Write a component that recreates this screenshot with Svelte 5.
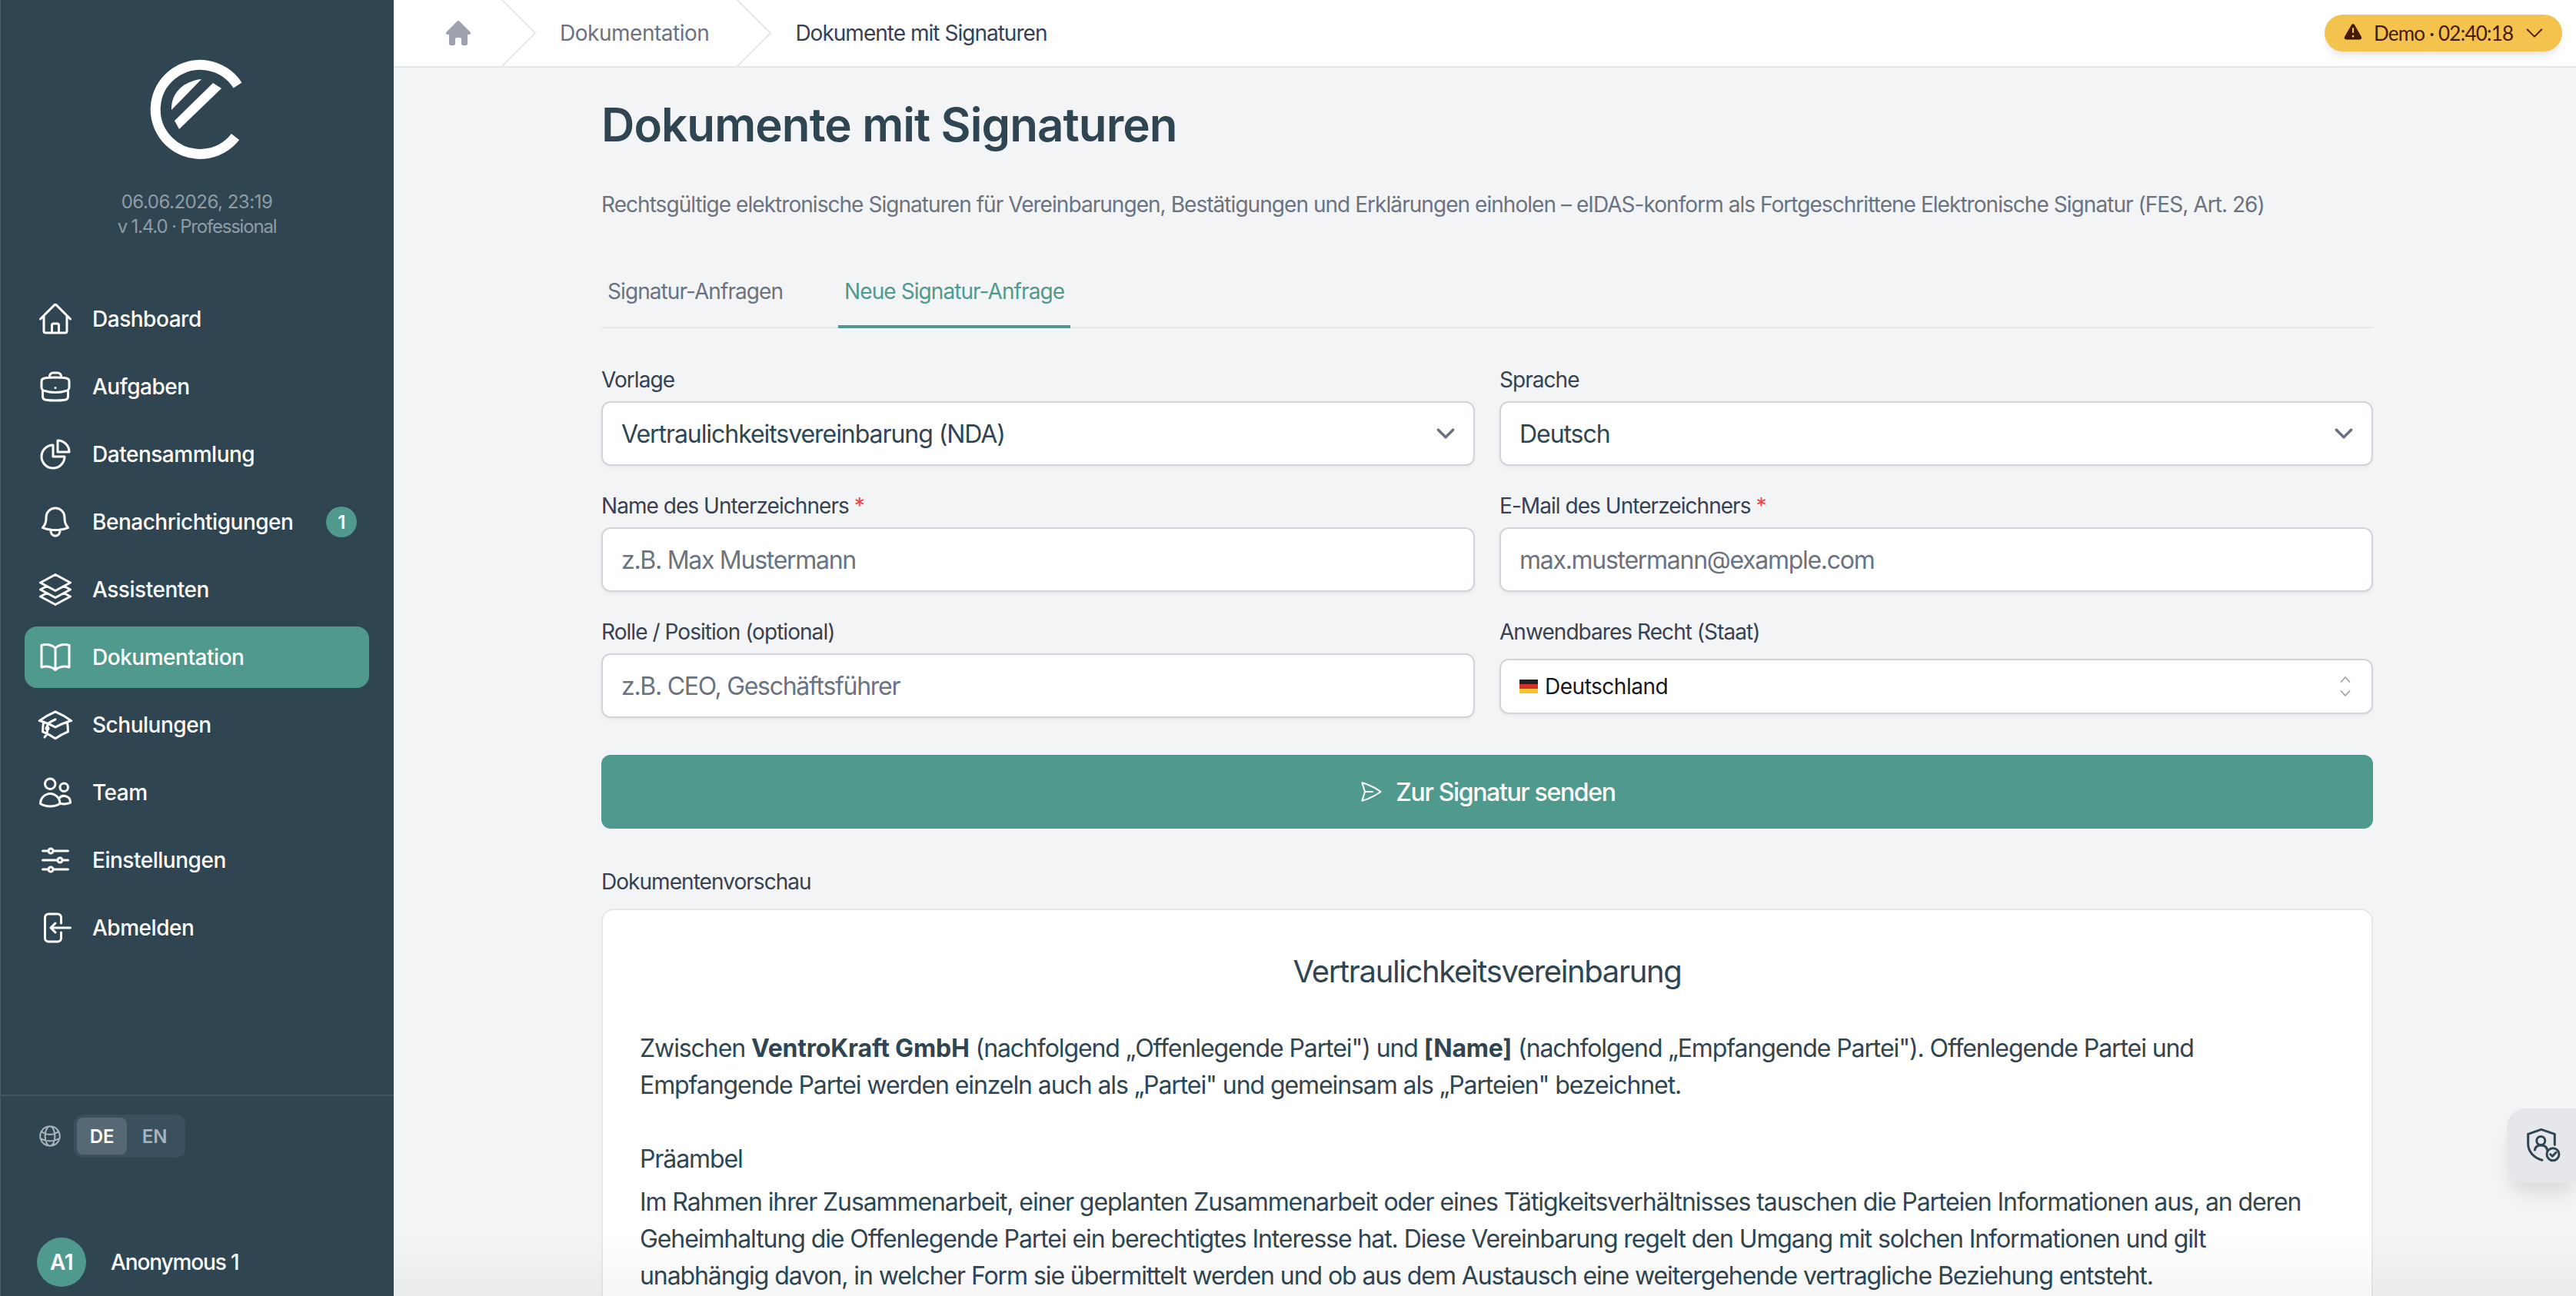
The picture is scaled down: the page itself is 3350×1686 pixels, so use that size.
<script>
	const nav = [
		{ label: 'Dashboard', d: 'm2.25 12 8.954-8.955c.44-.439 1.152-.439 1.591 0L21.75 12M4.5 9.75v10.125c0 .621.504 1.125 1.125 1.125H9.75v-4.875c0-.621.504-1.125 1.125-1.125h2.25c.621 0 1.125.504 1.125 1.125V21h4.125c.621 0 1.125-.504 1.125-1.125V9.75M8.25 21h8.25' },
		{ label: 'Aufgaben', d: 'M20.25 14.15v4.25c0 1.094-.787 2.036-1.872 2.18-2.087.277-4.216.42-6.378.42s-4.291-.143-6.378-.42c-1.085-.144-1.872-1.086-1.872-2.18v-4.25m16.5 0a2.18 2.18 0 0 0 .75-1.661V8.706c0-1.081-.768-2.015-1.837-2.175a48.114 48.114 0 0 0-3.413-.387m4.5 8.006c-.194.165-.42.295-.673.38A23.978 23.978 0 0 1 12 15.75c-2.648 0-5.195-.429-7.577-1.22a2.016 2.016 0 0 1-.673-.38m0 0A2.18 2.18 0 0 1 3 12.489V8.706c0-1.081.768-2.015 1.837-2.175a48.111 48.111 0 0 1 3.413-.387m7.5 0V5.25A2.25 2.25 0 0 0 13.5 3h-3a2.25 2.25 0 0 0-2.25 2.25v.894m7.5 0a48.667 48.667 0 0 0-7.5 0M12 12.75h.008v.008H12v-.008Z' },
		{ label: 'Datensammlung', d: 'M10.5 6a7.5 7.5 0 1 0 7.5 7.5h-7.5V6Z M13.5 10.5H21A7.5 7.5 0 0 0 13.5 3v7.5Z' },
		{ label: 'Benachrichtigungen', badge: 1, d: 'M14.857 17.082a23.848 23.848 0 0 0 5.454-1.31A8.967 8.967 0 0 1 18 9.75V9A6 6 0 0 0 6 9v.75a8.967 8.967 0 0 1-2.312 6.022c1.733.64 3.56 1.085 5.455 1.31m5.714 0a24.255 24.255 0 0 1-5.714 0m5.714 0a3 3 0 1 1-5.714 0' },
		{ label: 'Assistenten', d: 'M6.429 9.75 2.25 12l4.179 2.25m0-4.5 5.571 3 5.571-3m-11.142 0L2.25 7.5 12 2.25l9.75 5.25-4.179 2.25m0 0L21.75 12l-4.179 2.25m0 0 4.179 2.25L12 21.75 2.25 16.5l4.179-2.25m11.142 0-5.571 3-5.571-3' },
		{ label: 'Dokumentation', active: true, d: 'M12 6.042A8.967 8.967 0 0 0 6 3.75c-1.052 0-2.062.18-3 .512v14.25A8.987 8.987 0 0 1 6 18c2.305 0 4.408.867 6 2.292m0-14.25a8.966 8.966 0 0 1 6-2.292c1.052 0 2.062.18 3 .512v14.25A8.987 8.987 0 0 0 18 18a8.967 8.967 0 0 0-6 2.292m0-14.25v14.25' },
		{ label: 'Schulungen', d: 'M4.26 10.147a60.438 60.438 0 0 0-.491 6.347A48.62 48.62 0 0 1 12 20.904a48.62 48.62 0 0 1 8.232-4.41 60.46 60.46 0 0 0-.491-6.347m-15.482 0a50.636 50.636 0 0 0-2.658-.813A59.906 59.906 0 0 1 12 3.493a59.903 59.903 0 0 1 10.399 5.84c-.896.248-1.783.52-2.658.814m-15.482 0A50.717 50.717 0 0 1 12 13.489a50.702 50.702 0 0 1 7.74-3.342M6.75 15a.75.75 0 1 0 0-1.5.75.75 0 0 0 0 1.5Zm0 0v-3.675A55.378 55.378 0 0 1 12 8.443m-7.007 11.55A5.981 5.981 0 0 0 6.75 15.75v-1.5' },
		{ label: 'Team', d: 'M15 19.128a9.38 9.38 0 0 0 2.625.372 9.337 9.337 0 0 0 4.121-.952 4.125 4.125 0 0 0-7.533-2.493M15 19.128v-.003c0-1.113-.285-2.16-.786-3.07M15 19.128v.106A12.318 12.318 0 0 1 8.624 21c-2.331 0-4.512-.645-6.374-1.766l-.001-.109a6.375 6.375 0 0 1 11.964-3.07M12 6.375a3.375 3.375 0 1 1-6.75 0 3.375 3.375 0 0 1 6.75 0Zm8.25 2.25a2.625 2.625 0 1 1-5.25 0 2.625 2.625 0 0 1 5.25 0Z' },
		{ label: 'Einstellungen', d: 'M10.5 6h9.75M10.5 6a1.5 1.5 0 1 1-3 0m3 0a1.5 1.5 0 1 0-3 0M3.75 6H7.5m3 12h9.75m-9.75 0a1.5 1.5 0 0 1-3 0m3 0a1.5 1.5 0 0 0-3 0m-3.75 0H7.5m9-6h3.75m-3.75 0a1.5 1.5 0 0 1-3 0m3 0a1.5 1.5 0 0 0-3 0m-9.75 0h9.75' },
		{ label: 'Abmelden', d: 'M15.75 9V5.25A2.25 2.25 0 0 0 13.5 3h-6a2.25 2.25 0 0 0-2.25 2.25v13.5A2.25 2.25 0 0 0 7.5 21h6a2.25 2.25 0 0 0 2.25-2.25V15M12 9l-3 3m0 0 3 3m-3-3h12.75' }
	];
</script>

{#snippet chevron()}
	<svg class="chev" viewBox="0 0 20 20" fill="none" stroke="currentColor" stroke-width="1.5" stroke-linecap="round" stroke-linejoin="round">
		<path d="m6 8 4 4 4-4" />
	</svg>
{/snippet}

{#snippet crumbSep()}
	<svg class="crumb-sep" viewBox="0 0 24 44" preserveAspectRatio="none" fill="currentColor">
		<path d="M.293 0l22 22-22 22h1.414l22-22-22-22H.293z" />
	</svg>
{/snippet}

<div class="app">
	<aside class="side">
		<div class="brand">
			<svg class="logo" viewBox="190 72 136 144" fill="#fff">
				<path d="M309 111A58 58 0 1 0 306 178" fill="none" stroke="#fff" stroke-width="13" />
				<path d="M277 108 288 115 233 168 227 157Z" />
				<path d="M262 103C240 105 222 120 223 143Z" />
			</svg>
			<div class="stamp">06.06.2026, 23:19<br /><span class="plan">v 1.4.0 · Professional</span></div>
		</div>

		<nav class="nav">
			{#each nav as item}
				<a class="nav-item" class:active={item.active} href="#top">
					<svg class="ico" viewBox="0 0 24 24" fill="none" stroke="currentColor" stroke-width="1.5" stroke-linecap="round" stroke-linejoin="round">
						<path d={item.d} />
					</svg>
					<span class="nav-label">{item.label}</span>
					{#if item.badge}<span class="badge">{item.badge}</span>{/if}
				</a>
			{/each}
		</nav>

		<div class="lang">
			<svg class="globe" viewBox="0 0 24 24" fill="none" stroke="currentColor" stroke-width="1.5" stroke-linecap="round" stroke-linejoin="round">
				<path d="M12 21a9.004 9.004 0 0 0 8.716-6.747M12 21a9.004 9.004 0 0 1-8.716-6.747M12 21c2.485 0 4.5-4.03 4.5-9S14.485 3 12 3m0 18c-2.485 0-4.5-4.03-4.5-9S9.515 3 12 3m0 0a8.997 8.997 0 0 1 7.843 4.582M12 3a8.997 8.997 0 0 0-7.843 4.582m15.686 0A11.953 11.953 0 0 1 12 10.5c-2.998 0-5.74-1.1-7.843-2.918m15.686 0A8.959 8.959 0 0 1 21 12c0 .778-.099 1.533-.284 2.253m0 0A17.919 17.919 0 0 1 12 16.5c-3.162 0-6.133-.815-8.716-2.247m0 0A9.015 9.015 0 0 1 3 12c0-1.605.42-3.113 1.157-4.418" />
			</svg>
			<div class="switch">
				<span class="opt on">DE</span>
				<span class="opt">EN</span>
			</div>
		</div>

		<div class="user">
			<span class="avatar">A1</span>
			<span class="user-name">Anonymous 1</span>
		</div>
	</aside>

	<div class="main">
		<header class="topbar">
			<div class="crumbs">
				<svg class="crumb-home" viewBox="0 0 20 20" fill="currentColor">
					<path d="M9.293 2.293a1 1 0 0 1 1.414 0l7 7A1 1 0 0 1 17 11h-1v6a1 1 0 0 1-1 1h-2a1 1 0 0 1-1-1v-3a1 1 0 0 0-1-1H9a1 1 0 0 0-1 1v3a1 1 0 0 1-1 1H5a1 1 0 0 1-1-1v-6H3a1 1 0 0 1-.707-1.707l7-7Z" />
				</svg>
				{@render crumbSep()}
				<span class="crumb">Dokumentation</span>
				{@render crumbSep()}
				<span class="crumb current">Dokumente mit Signaturen</span>
			</div>
			<button class="demo">
				<svg class="demo-warn" viewBox="0 0 20 20" fill="currentColor">
					<path fill-rule="evenodd" clip-rule="evenodd" d="M8.485 2.495c.673-1.167 2.357-1.167 3.03 0l6.28 10.875c.673 1.167-.17 2.625-1.516 2.625H3.72c-1.347 0-2.189-1.458-1.515-2.625L8.485 2.495ZM10 5a.75.75 0 0 1 .75.75v3.5a.75.75 0 0 1-1.5 0v-3.5A.75.75 0 0 1 10 5Zm0 9a1 1 0 1 0 0-2 1 1 0 0 0 0 2Z" />
				</svg>
				<span class="demo-text">Demo · 02:40:18</span>
				<svg class="demo-chev" viewBox="0 0 24 24" fill="none" stroke="currentColor" stroke-width="1.5" stroke-linecap="round" stroke-linejoin="round">
					<path d="m4.500 8.250 7.500 7.500 7.500-7.500" />
				</svg>
			</button>
		</header>

		<main class="page">
			<h1>Dokumente mit Signaturen</h1>
			<p class="lead">Rechtsgültige elektronische Signaturen für Vereinbarungen, Bestätigungen und Erklärungen einholen – eIDAS-konform als Fortgeschrittene Elektronische Signatur (FES, Art. 26)</p>

			<div class="tabs">
				<span class="tab">Signatur-Anfragen</span>
				<span class="tab on">Neue Signatur-Anfrage</span>
			</div>

			<form class="form">
				<div class="field">
					<span class="label">Vorlage</span>
					<div class="select-wrap">
						<select class="ctl pick"><option>Vertraulichkeitsvereinbarung (NDA)</option></select>
						{@render chevron()}
					</div>
				</div>
				<div class="field">
					<span class="label">Sprache</span>
					<div class="select-wrap">
						<select class="ctl pick"><option>Deutsch</option></select>
						{@render chevron()}
					</div>
				</div>
				<div class="field">
					<span class="label">Name des Unterzeichners <em>*</em></span>
					<input class="ctl" placeholder="z.B. Max Mustermann" />
				</div>
				<div class="field">
					<span class="label">E-Mail des Unterzeichners <em>*</em></span>
					<input class="ctl" placeholder="max.mustermann@example.com" />
				</div>
				<div class="field">
					<span class="label">Rolle / Position (optional)</span>
					<input class="ctl" placeholder="z.B. CEO, Geschäftsführer" />
				</div>
				<div class="field">
					<span class="label">Anwendbares Recht (Staat)</span>
					<div class="combo">
						<svg class="flag" viewBox="0 0 24 18">
							<rect width="24" height="6" fill="#222" />
							<rect y="6" width="24" height="6" fill="#d3302a" />
							<rect y="12" width="24" height="6" fill="#f4c430" />
						</svg>
						<span class="combo-text">Deutschland</span>
						<svg class="updown" viewBox="0 0 16 28" fill="none" stroke="currentColor" stroke-width="1.8" stroke-linecap="round" stroke-linejoin="round">
							<path d="m2.500 8 5.500-6 5.500 6M2.500 20l5.500 6 5.500-6" />
						</svg>
					</div>
				</div>
			</form>

			<button class="send">
				<svg class="send-ico" viewBox="0 0 24 24" fill="none" stroke="currentColor" stroke-width="1.5" stroke-linecap="round" stroke-linejoin="round">
					<path d="M6 12 3.269 3.125A59.769 59.769 0 0 1 21.485 12 59.768 59.768 0 0 1 3.27 20.875L5.999 12Zm0 0h7.500" />
				</svg>
				Zur Signatur senden
			</button>

			<div class="label preview-label">Dokumentenvorschau</div>
			<article class="doc">
				<h2>Vertraulichkeitsvereinbarung</h2>
				<p>Zwischen <b>VentroKraft GmbH</b> (nachfolgend „Offenlegende Partei") und <b>[Name]</b> (nachfolgend „Empfangende Partei"). Offenlegende Partei und Empfangende Partei werden einzeln auch als „Partei" und gemeinsam als „Parteien" bezeichnet.</p>
				<h3>Präambel</h3>
				<p>Im Rahmen ihrer Zusammenarbeit, einer geplanten Zusammenarbeit oder eines Tätigkeitsverhältnisses tauschen die Parteien Informationen aus, an deren Geheimhaltung die Offenlegende Partei ein berechtigtes Interesse hat. Diese Vereinbarung regelt den Umgang mit solchen Informationen und gilt unabhängig davon, in welcher Form sie übermittelt werden und ob aus dem Austausch eine weitergehende vertragliche Beziehung entsteht.</p>
			</article>
		</main>
		<div class="fade"></div>
	</div>

	<button class="privacy" aria-label="Datenschutz">
		<svg viewBox="0 0 48 48" fill="none" stroke="currentColor" stroke-width="3" stroke-linecap="round" stroke-linejoin="round">
			<path d="M38.300 23.300V9.300L20.800 3.300 3.700 9.300V22C3.700 32 11 40 22 43.300" />
			<circle cx="20.300" cy="18" r="5.500" />
			<path d="M12.500 30C13 26 16 24 20.300 24 25 24 28 26 28.500 30" />
			<circle cx="36" cy="35.700" r="8" />
			<path d="m32.700 35.700 2.600 2.600 4.700-5" />
		</svg>
	</button>
</div>

<style>
	:global(body) {
		margin: 0;
		background: #f3f4f6;
	}
	.app {
		display: flex;
		height: 1686px;
		overflow: hidden;
		font-family: Inter, 'Open Sans', sans-serif;
		letter-spacing: -0.03em;
		color: #2f4552;
	}

	/* sidebar */
	.side {
		width: 512px;
		flex: none;
		display: flex;
		flex-direction: column;
		background: #2f4552;
		box-shadow: inset 1px 0 0 #4a5d69;
		color: #fff;
	}
	.brand {
		display: flex;
		flex-direction: column;
		align-items: center;
		padding-top: 72px;
		height: 303px;
	}
	.logo {
		width: 136px;
		height: 144px;
		margin-left: 4px;
	}
	.stamp {
		margin-top: 31px;
		font-size: 24px;
		line-height: 32px;
		text-align: center;
		color: #8f9ca5;
	}
	.plan {
		letter-spacing: -0.05em;
	}
	.nav {
		display: flex;
		flex-direction: column;
		gap: 8px;
		padding: 0 32px;
	}
	.nav-item {
		height: 80px;
		display: flex;
		align-items: center;
		gap: 24px;
		padding: 0 16px;
		border-radius: 16px;
		color: #fff;
		text-decoration: none;
		font-size: 28px;
		font-weight: 500;
	}
	.nav-item.active {
		background: #4f9a8d;
	}
	.ico {
		width: 48px;
		height: 48px;
		flex: none;
	}
	.nav-label {
		flex: 1;
	}
	.badge {
		width: 40px;
		height: 40px;
		border-radius: 50%;
		background: #4f9a8d;
		display: grid;
		place-items: center;
		font-size: 24px;
		font-weight: 600;
	}
	.lang {
		margin-top: auto;
		border-top: 2px solid #3f5563;
		padding: 24px 48px 0;
		display: flex;
		align-items: flex-start;
		gap: 14px;
		height: 56px;
	}
	.globe {
		width: 34px;
		height: 34px;
		margin-top: 11px;
		color: #a8b2b9;
	}
	.switch {
		display: flex;
		padding: 4px;
		border-radius: 12px;
		background: #3a505e;
	}
	.opt {
		width: 65px;
		height: 48px;
		display: grid;
		place-items: center;
		border-radius: 8px;
		font-size: 24px;
		font-weight: 600;
		letter-spacing: -0.01em;
		color: #a8b2b9;
	}
	.opt + .opt {
		width: 72px;
	}
	.opt.on {
		background: #566874;
		color: #fff;
	}
	.user {
		display: flex;
		align-items: center;
		gap: 32px;
		padding: 0 48px;
		margin-top: 104px;
		margin-bottom: 12px;
	}
	.avatar {
		width: 64px;
		height: 64px;
		border-radius: 50%;
		background: #4f9a8d;
		display: grid;
		place-items: center;
		font-size: 28px;
		font-weight: 600;
	}
	.user-name {
		font-size: 28px;
		font-weight: 500;
		letter-spacing: -0.04em;
	}

	/* top bar */
	.main {
		flex: 1;
		min-width: 0;
		display: flex;
		flex-direction: column;
		position: relative;
		background: #f3f4f6;
	}
	.topbar {
		height: 86px;
		flex: none;
		display: flex;
		align-items: center;
		justify-content: space-between;
		padding: 0 18px 0 64px;
		background: #fff;
		border-bottom: 2px solid #e5e7eb;
	}
	.crumbs {
		display: flex;
		align-items: center;
		height: 86px;
		font-size: 28px;
	}
	.crumb-home {
		width: 40px;
		height: 40px;
		color: #9ca3af;
	}
	.crumb-sep {
		width: 48px;
		height: 88px;
		margin-left: 34px;
		margin-right: 30px;
		color: #e5e7eb;
	}
	.crumb {
		color: #6b7280;
	}
	.crumb.current {
		color: #374151;
		letter-spacing: -0.035em;
	}
	.demo {
		height: 48px;
		width: 309px;
		display: flex;
		align-items: center;
		gap: 13px;
		padding: 0 22px 0 23px;
		border: none;
		border-radius: 24px;
		background: #f3c34e;
		color: #451a03;
		font: 400 26px Lato, sans-serif;
		letter-spacing: -0.03em;
		box-shadow: 0 8px 12px -4px rgba(0, 0, 0, 0.12);
	}
	.demo-text {
		white-space: nowrap;
	}
	.demo-warn {
		width: 28px;
		height: 28px;
		flex: none;
	}
	.demo-chev {
		width: 30px;
		height: 30px;
		flex: none;
		margin-left: auto;
	}

	/* page */
	.page {
		width: 2304px;
		margin: 0 auto;
		position: relative;
		left: 3px;
	}
	h1 {
		margin: 38px 0 0;
		font-size: 60px;
		line-height: 72px;
		font-weight: 600;
		letter-spacing: -0.015em;
	}
	.lead {
		margin: 48px 0 0;
		font-size: 28px;
		line-height: 40px;
		letter-spacing: -0.034em;
		color: #6b7280;
	}
	.tabs {
		display: flex;
		gap: 64px;
		margin-top: 58px;
		border-bottom: 2px solid #e5e7eb;
		height: 81px;
	}
	.tab {
		padding: 15px 8px 0;
		height: 83px;
		box-sizing: border-box;
		font-size: 28px;
		line-height: 40px;
		letter-spacing: -0.033em;
		color: #6b7280;
	}
	.tab.on {
		color: #4f9a8d;
		border-bottom: 4px solid #4f9a8d;
	}
	.form {
		display: grid;
		grid-template-columns: 1fr 1fr;
		gap: 32px;
		margin-top: 47px;
	}
	.field {
		display: flex;
		flex-direction: column;
		gap: 8px;
		min-width: 0;
	}
	.label {
		font-size: 28px;
		line-height: 40px;
		letter-spacing: -0.034em;
		color: #374151;
	}
	.label em {
		color: #ef4444;
		font-style: normal;
	}
	.ctl {
		width: 100%;
		height: 84px;
		box-sizing: border-box;
		padding: 0 24px;
		border: 2px solid #d1d5db;
		border-radius: 12px;
		background: #fff;
		box-shadow: 0 2px 4px rgba(0, 0, 0, 0.05);
		font: 400 32px Inter, sans-serif;
		letter-spacing: -0.04em;
		color: #2f4552;
		appearance: none;
		outline: none;
	}
	.ctl.pick {
		letter-spacing: -0.033em;
	}
	.ctl::placeholder {
		color: #6b7280;
		opacity: 1;
	}
	.select-wrap {
		position: relative;
	}
	.chev {
		position: absolute;
		top: 18px;
		right: 14px;
		width: 48px;
		height: 48px;
		color: #6b7280;
		pointer-events: none;
	}
	.combo {
		margin-top: 7px;
		height: 72px;
		box-sizing: border-box;
		display: flex;
		align-items: center;
		padding: 0 26px 0 24px;
		border: 2px solid #d1d5db;
		border-radius: 12px;
		background: #fff;
		box-shadow: 0 2px 4px rgba(0, 0, 0, 0.05);
		font-size: 28px;
	}
	.flag {
		width: 24px;
		height: 18px;
		margin-right: 9px;
	}
	.combo-text {
		color: #111827;
		flex: 1;
	}
	.updown {
		width: 16px;
		height: 28px;
		color: #9ca3af;
	}
	.send {
		width: 100%;
		height: 96px;
		margin-top: 48px;
		display: flex;
		align-items: center;
		justify-content: center;
		gap: 16px;
		border: none;
		border-radius: 12px;
		background: #4f9a8d;
		color: #fff;
		font: 500 32px Inter, sans-serif;
		letter-spacing: -0.042em;
	}
	.send-ico {
		width: 32px;
		height: 32px;
	}
	.preview-label {
		margin-top: 49px;
	}
	.doc {
		margin-top: 15px;
		padding: 48px;
		border: 2px solid #e5e7eb;
		border-radius: 16px;
		background: #fff;
		font-size: 32px;
		line-height: 48px;
		letter-spacing: -0.034em;
	}
	h2 {
		margin: 4px 0 0;
		text-align: center;
		font-size: 40px;
		line-height: 56px;
		font-weight: 400;
		letter-spacing: -0.034em;
	}
	.doc p {
		margin: 48px 0 0;
	}
	.doc b {
		font-weight: 700;
		letter-spacing: -0.006em;
	}
	h3 {
		margin: 48px 0 8px;
		font-size: 32px;
		line-height: 48px;
		font-weight: 400;
	}
	.doc h3 + p {
		margin-top: 8px;
	}
	.fade {
		position: absolute;
		left: 0;
		right: 0;
		bottom: 0;
		height: 80px;
		background: linear-gradient(rgba(0, 0, 0, 0), rgba(0, 0, 0, 0.035));
		pointer-events: none;
	}

	/* floating privacy tab */
	.privacy {
		position: fixed;
		right: 0;
		top: 1442px;
		width: 90px;
		height: 96px;
		display: grid;
		place-items: center;
		padding: 0 0 0 6px;
		border: none;
		border-radius: 24px 0 0 24px;
		background: #e5e7eb;
		color: #2f4552;
		box-shadow: 0 20px 25px -5px rgba(0, 0, 0, 0.1);
	}
	.privacy svg {
		width: 48px;
		height: 48px;
	}
</style>
